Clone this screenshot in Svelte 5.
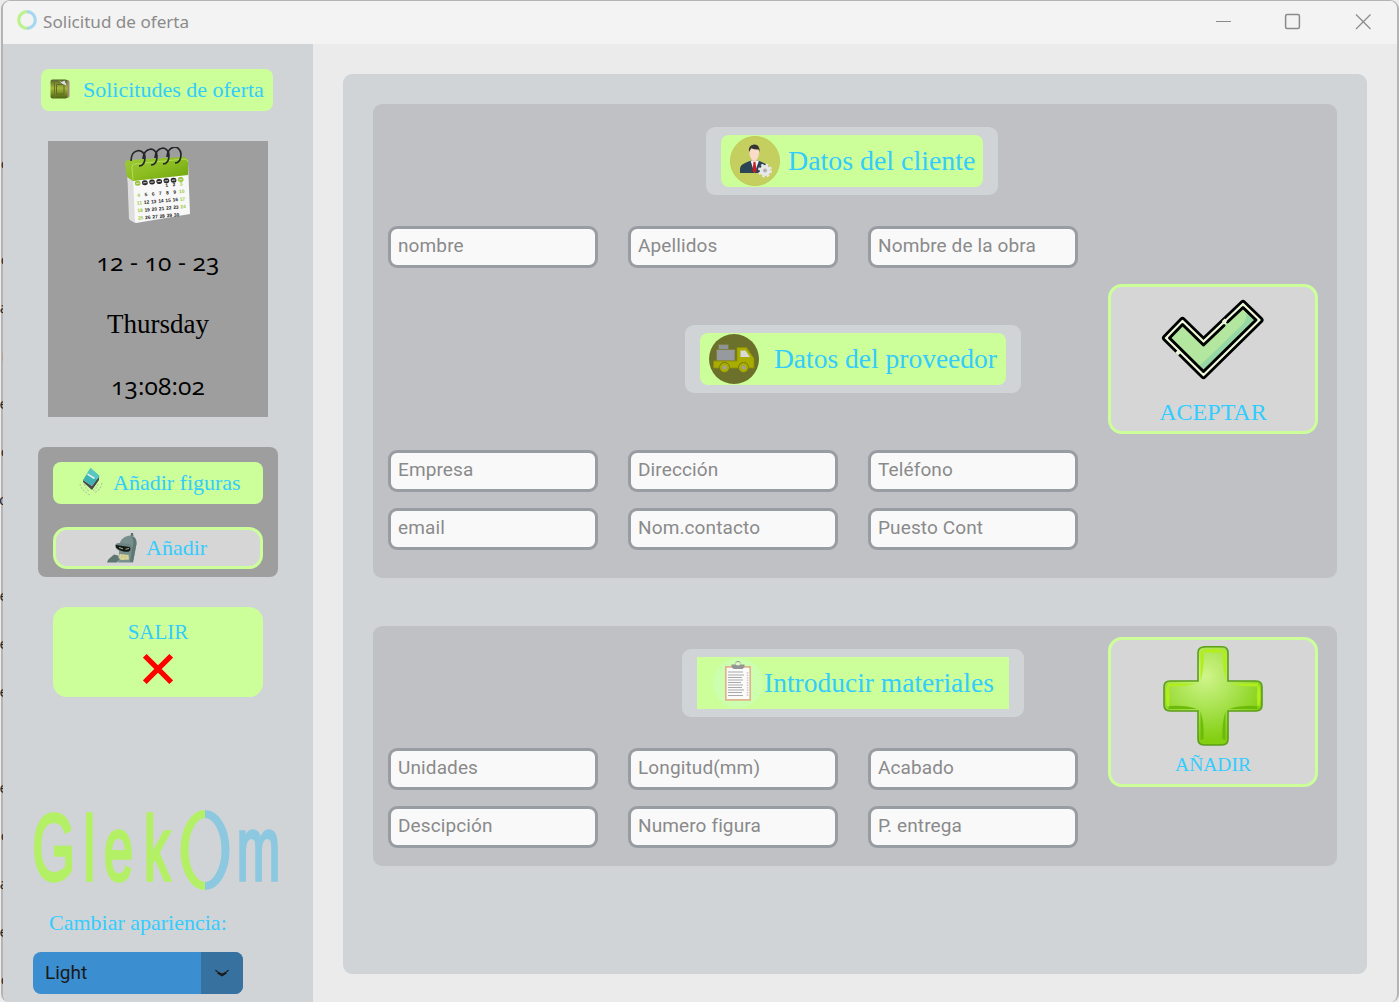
<script>
  let date = $state('12 - 10 - 23');
  let day = $state('Thursday');
  let time = $state('13:08:02');

  const customer = ['nombre', 'Apellidos', 'Nombre de la obra'];
  const company = ['Empresa', 'Dirección', 'Teléfono'];
  const contact = ['email', 'Nom.contacto', 'Puesto Cont'];
  const materials = ['Unidades', 'Longitud(mm)', 'Acabado', 'Descipción', 'Numero figura', 'P. entrega'];

  // Line endings of the document lying behind the window
  const behind = ['c', '', 'c', 'a', 'r', 'e', 'c', 'o', '', 'e', 'e', 'e', '', 'e', 'c', 'a', 'e', 'c'];
  const weeks = [
    ['', '', '', '', '1', '2', '3'],
    ['4', '5', '6', '7', '8', '9', '10'],
    ['11', '12', '13', '14', '15', '16', '17'],
    ['18', '19', '20', '21', '22', '23', '24'],
    ['25', '26', '27', '28', '29', '30', '']
  ];
</script>

<div class="desktop">
  <div class="behind">
    {#each behind as letter}<span>{letter}</span>{/each}
  </div>
  <div class="window">
    <header class="titlebar">
      <svg class="app-icon" width="20" height="20" viewBox="0 0 20 20" fill="none" stroke-width="3.200">
        <path d="M10 1.700a8.300 8.300 0 0 0 0 16.600" stroke="#bdf28a" />
        <path d="M10 1.700a8.300 8.300 0 0 1 0 16.600" stroke="#a5d8ee" />
      </svg>
      <span class="title">Solicitud de oferta</span>
      <svg class="controls" width="160" height="20" viewBox="0 0 160 20" fill="none" stroke="#8a8a8a" stroke-width="1.200">
        <path d="M1 10.500h15" />
        <rect x="70.600" y="3.600" width="13.800" height="13.800" rx="1.500" stroke-width="1.500" />
        <path d="M141 3.500l14.500 14.500M155.500 3.500l-14.500 14.500" />
      </svg>
    </header>

    <div class="body">
      <aside>
        <div class="tag requests">
          <svg width="20" height="20" viewBox="0 0 20 20">
            <defs>
              <linearGradient id="book" x1="0" y1="0" x2="0" y2="1">
                <stop offset="0" stop-color="#53602a" /><stop offset=".45" stop-color="#a7b83c" /><stop offset="1" stop-color="#4a6310" />
              </linearGradient>
            </defs>
            <rect x="2" y="1" width="17.500" height="18" rx="2" fill="#a68a80" />
            <rect x=".5" y=".5" width="17" height="19" rx="2" fill="url(#book)" />
            <path d="M4.500 1v18" stroke="#65752a" />
            <path d="M6.500 5.500h7.500v9.500h-7.500z" fill="none" stroke="#5d6d22" />
            <path d="M8.500 1l3 2 3-1.500 2 5-4-1.500z" fill="#d9dde5" />
          </svg>
          <span>Solicitudes de oferta</span>
        </div>

        <section class="clock">
          <svg width="68" height="78" viewBox="0 0 68 78">
            <defs>
              <linearGradient id="cal" x1="0" y1="0" x2="1" y2="1">
                <stop offset="0" stop-color="#9fca3c" /><stop offset=".5" stop-color="#8cbd20" /><stop offset="1" stop-color="#6ba30c" />
              </linearGradient>
            </defs>
            <path d="M3 18l3 55 6 3 54-9-2-51z" fill="#f8f8f8" />
            <path d="M3 18l2 54 6 4-2-48z" fill="#dedede" />
            <path d="M1 17q0-4 4-4l54-3q5 0 5 5v13L9 34 3 30z" fill="url(#cal)" />
            <path d="M9 33l-1-13q0-3 3-3l49-5q4 0 4 3" fill="none" stroke="#b2db59" stroke-width="1" />
            <g fill="none" stroke="#242629" stroke-width="1.700">
              <path d="M7 14c0-13 13-13 14-4 0 6-2 9-6 9" />
              <path d="M19 12c1-12 13-13 14-3 0 6-2 9-6 9" />
              <path d="M31 11c1-12 13-13 14-3 0 6-2 9-6 9" />
              <path d="M43 10c1-12 13-13 14-3 0 6-2 9-6 9" />
            </g>
            <g transform="rotate(-5 12 40)">
              {#each [0, 1, 2, 3, 4, 5, 6] as i}
                <ellipse cx={14 + i * 7.2} cy="36.500" rx="2.900" ry="2.500" class:weekend={i === 0 || i === 6} class="dow" />
                <path d="M{12.3 + i * 7.2} 36.500h3.400" stroke="#d8d8d8" stroke-width=".9" />
              {/each}
              {#each weeks as week, r}
                {#each week as n, c}
                  <text x={14 + c * 7.2} y={42.5 + r * 7.6} class="num" class:weekend={c === 0 || c === 6}>{n}</text>
                {/each}
              {/each}
            </g>
          </svg>
          <p class="digits">{date}</p>
          <p class="day">{day}</p>
          <p class="digits time">{time}</p>
        </section>

        <section class="figures">
          <div class="tag add-figures">
            <svg width="26" height="30" viewBox="0 0 26 30">
              <g fill="none" stroke="#b3d39a" stroke-width="1.300" stroke-dasharray="2 1.300">
                <path d="M2 17c1 4 4 8 10 11M6 17c1 3 2 5 5 7M24 16c-1 5-4 8-8 10M20 17c-1 3-2 5-5 7" />
              </g>
              <path d="M5 13l9 6 7-10v4l-7 10-9-8z" fill="#4c4650" />
              <path d="M12.500 1l9 8-7.500 10-9-6z" fill="#3fb3b4" />
              <path d="M12.500 1l9 8-2.500 3.500-9-7z" fill="#59c6c2" />
              <path d="M9.500 7l7 4.500" stroke="#d8f3ed" stroke-width="1.800" />
            </svg>
            <span>Añadir figuras</span>
          </div>
          <button class="outlined add-small">
            <svg width="30" height="30" viewBox="0 0 30 30">
              <path d="M24 0h2l.5 3.500h-3z" fill="#59706f" />
              <path d="M12 13c1-7 6-10.500 12-10.500 4 .5 6 4 5.500 8L26 29.500H11l1-9z" fill="#77908e" />
              <path d="M24 4c3 2 3 7 1 12l-2 13h3l3.500-18c0-4-1-7-5.500-7z" fill="#5e7876" />
              <path d="M8 12q1-2 4-2l10 1q3 1 3 4 0 4-4 4l-8-1q-5-2-5-6z" fill="#6c8583" />
              <path d="M9 12l13.500 2q2 2-.5 4.500-8 1-13-4z" fill="#111817" />
              <path d="M12 14.500l4 1.300M18.500 16.300l3.500-.8" stroke="#c9c585" stroke-width=".9" />
              <path d="M12.500 21l9 1 .5 4.500-8 .5-2-2z" fill="#ded99c" />
              <path d="M13 24h9M15 21.500v5M18 22v5" stroke="#b0b080" stroke-width=".4" />
              <path d="M0 29.500c1-4 4-5 7-8l4 1 1 4-2 3z" fill="#5d7573" />
            </svg>
            <span>Añadir</span>
          </button>
        </section>

        <button class="exit">
          <span>SALIR</span>
          <svg width="30" height="30" viewBox="0 0 30 30" stroke="#f00" stroke-width="5.200"><path d="M1.800 1.800l26.400 26.400M28.200 1.800L1.800 28.200" /></svg>
        </button>

        <svg class="logo" width="250" height="84" viewBox="0 0 250 84">
          <g transform="scale(.58 1)" font-size="90" fill="#b4f065" stroke="#b4f065">
            <text y="71" x=".5" font-size="95">G</text>
            <text y="71" x="89">l</text>
            <text y="71" x="124">e</text>
            <text y="71" x="193">k</text>
            <text y="71" x="353" fill="#8cc8e0" stroke="#8cc8e0">m</text>
          </g>
          <path d="M173 5a20.500 36 0 0 0 0 72" fill="none" stroke="#b4f065" />
          <path d="M173 5a20.500 36 0 0 1 0 72" fill="none" stroke="#8cc8e0" />
        </svg>

        <label class="appearance" for="mode">Cambiar apariencia:</label>
        <div class="select" id="mode" role="combobox" tabindex="0" aria-expanded="false" aria-controls="mode">
          <span>Light</span>
          <div class="arrow">
            <svg width="14" height="8" viewBox="0 0 14 8" fill="none" stroke="#1c1c1c" stroke-linecap="round">
              <path d="M.8 1.500l1.500 1M13.200 1.500l-1.500 1" stroke-width="1.300" /><path d="M3.500 4l3.500 2L10.500 4" stroke-width="2.500" />
            </svg>
          </div>
        </div>
      </aside>

      <main>
        <div class="panel">
          <section class="card people">
            <div class="badge client">
              <div class="inner">
                <svg width="50" height="50" viewBox="0 0 50 50">
                  <circle cx="25" cy="25" r="24.500" fill="#c5cf60" stroke="#bfca58" />
                  <path d="M10 37v-4q0-4 5-6l7-3h5l7 3q5 2 5 6v4z" fill="#2b4554" />
                  <path d="M20.500 24.500L24.500 37l4.500-12.500z" fill="#f5f5f5" />
                  <path d="M21.500 19h5.500v5l-2.700 3-2.800-3z" fill="#f0cfba" />
                  <path d="M23.500 26h2l1 9-2 2-2-2z" fill="#c91d27" />
                  <path d="M19.500 13h9.500v5q-1 6-4.700 6t-4.800-6z" fill="#fbdcca" />
                  <path d="M19 16q-1-7 5-7.500 6-.5 5.500 7.500l-1-2.500q-5 0-7-1.500z" fill="#373435" />
                  <circle cx="35" cy="34.500" r="5.400" fill="#e8e8e8" />
                  <circle cx="35" cy="34.500" r="5.500" fill="none" stroke="#e8e8e8" stroke-width="3" stroke-dasharray="2.300 2.020" />
                  <circle cx="35" cy="34.500" r="2" fill="#b0b0b0" />
                </svg>
                <span>Datos del cliente</span>
              </div>
            </div>
            {#each customer as label}<input placeholder={label} aria-label={label} />{/each}

            <button class="outlined action accept">
              <svg width="102" height="80" viewBox="0 0 102 80" stroke-linejoin="round" stroke-linecap="round" fill="none">
                <path d="M20.500 20.500L41.500 41 81 3.500 98 20 41.500 75.500 3.500 38z" stroke="#000" stroke-width="7" />
                <path d="M20.500 20.500L41.500 41 81 3.500 98 20 41.500 75.500 3.500 38z" fill="#eefbdc" stroke="#eefbdc" stroke-width="1.500" />
                <path d="M20.500 24.500L41.500 45 81 7.500 94 20 41.500 71.500 7.500 38z" fill="#b3e69e" />
                <path d="M84 10.500L94 20 41.500 71.500 37 66.500 80 25q6-6 4-14.500z" fill="#96d7a5" />
                <path d="M62 25.500L41.500 45 20.500 24.500 7.500 38 41.500 71.500 94 20 81 7.500 65.500 22" stroke="#000" stroke-width="3" />
                <path d="M61 22.500l3-2.800M14.500 51.500l2.800 2.800" stroke="#e8f6d8" stroke-width="3.500" stroke-linecap="butt" />
              </svg>
              <span>ACEPTAR</span>
            </button>

            <div class="badge provider">
              <div class="inner">
                <svg width="50" height="50" viewBox="0 0 50 50">
                  <circle cx="25" cy="25" r="25" fill="#6b702b" />
                  <g stroke="#7f7e3d" stroke-width=".9">
                    <path d="M9.500 10.500h10v5h-10z" fill="#8f9396" />
                    <path d="M7.500 15.500h18.500V27H7.500z" fill="#96999d" />
                    <path d="M4.500 27H28V13.500h9.500l7.500 11V34h-40.500z" fill="#a9ad00" stroke="#8b8f05" />
                    <path d="M31.500 16.500h5l4.500 6.500h-9.500z" fill="#d8dad9" stroke="none" />
                    <circle cx="15.500" cy="33.500" r="5" fill="#a9ad00" stroke="#70751b" />
                    <circle cx="34.500" cy="33.500" r="5" fill="#a9ad00" stroke="#70751b" />
                    <circle cx="15.500" cy="33.500" r="2.300" fill="#a3a18c" stroke="none" />
                    <circle cx="34.500" cy="33.500" r="2.300" fill="#a3a18c" stroke="none" />
                  </g>
                </svg>
                <span>Datos del proveedor</span>
              </div>
            </div>
            {#each company as label}<input class="company" placeholder={label} aria-label={label} />{/each}
            {#each contact as label}<input class="contact" placeholder={label} aria-label={label} />{/each}
          </section>

          <section class="card materials">
            <div class="badge stock">
              <div class="inner">
                <svg width="50" height="50" viewBox="0 0 50 50">
                  <circle cx="25" cy="25" r="25" fill="#ccffae" />
                  <path d="M12.800 8.800h24.400v33H12.800z" fill="#fafafa" stroke="#e2b48d" stroke-width="1.700" />
                  <path d="M18.500 6.500h3.500q0-3.500 3-3.500t3 3.500h3.500v2.500l-2 2h-9l-2-2z" fill="#949494" />
                  <ellipse cx="25" cy="5.700" rx="2.800" ry="1.700" fill="#dff5cc" />
                  <path d="M15 14h15M15 17h16M15 19.500h14M15 22h15M15 24.500h13M15 27h15M15 29.500h14M15 32h16M15 34.500h14M15 37.500h15" stroke="#a9a9a9" stroke-width="1" />
                  <path d="M34.500 14v24" stroke="#ccc" stroke-width="1.500" stroke-dasharray="1.500 1" />
                </svg>
                <span>Introducir materiales</span>
              </div>
            </div>
            <button class="outlined action add">
              <svg width="102" height="102" viewBox="0 0 102 102">
                <defs>
                  <radialGradient id="plus" cx=".42" cy=".3" r=".65">
                    <stop offset="0" stop-color="#d0f58c" /><stop offset=".5" stop-color="#a9e351" /><stop offset="1" stop-color="#83cf12" />
                  </radialGradient>
                </defs>
                <path d="M42 1.800h18q6 0 6 6V36h28q6 0 6 6v18q0 6-6 6H66v28q0 6-6 6H42q-6 0-6-6V66H8q-6 0-6-6V42q0-6 6-6h28V8q0-6 6-6z" fill="url(#plus)" stroke="#5b9f18" stroke-width="1.600" />
                <g fill="#b2ee1e">
                  <path d="M38.500 36V7q3-3 3.500 2 0 15-3.500 27zM40 5q11-2 22 0v2q-11 1.500-22 0zM64 35V7q-3-3-3.500 2 0 15 3.500 26z" />
                  <path d="M67 38.500h29v2.500q-16 1-29-2.500zM35 38.500H6v2.500q16 1 29-2.500zM97.500 41q2 10 0 20h-2q-1.500-10 0-20zM5 41q-2 10 0 20h2q1.500-10 0-20z" />
                </g>
                <g fill="#6cbb0a">
                  <path d="M35 64H6l1.500-3Q23 60 35 64zM67 64h29l-1.500-3Q79 60 67 64zM38.500 66v29l3-1q1-14-3-28zM63.500 66v29l-3-1q-1-14 3-28z" />
                </g>
              </svg>
              <span>AÑADIR</span>
            </button>
            {#each materials as label}<input placeholder={label} aria-label={label} />{/each}
          </section>
        </div>
      </main>
    </div>
  </div>
</div>

<style>
  :global(body) { background: #ececec; overflow: hidden; }
  * { box-sizing: border-box; }
  .desktop {
    position: relative; display: flex; width: 1399px; height: 1002px; padding-left: 1px;
    background: #ececec; font-family: "Liberation Serif", serif; color: #33ccff; overflow: hidden;
  }
  .behind {
    position: absolute; left: 0; top: 139px; width: 3px; z-index: 1; overflow: hidden;
    display: flex; flex-direction: column; align-items: flex-end;
    font: 15px/48px "Open Sans", sans-serif; color: #222;
  }
  .behind span { height: 48px; flex: none; margin-right: -5px; }
  .window {
    flex: 1; display: flex; flex-direction: column; background: #ebebeb;
    border: 2px solid #b4b4b4; border-top-width: 1px; border-bottom: 0; border-radius: 9px 9px 8px 8px; overflow: hidden;
  }
  .titlebar { height: 43px; flex: none; display: flex; align-items: center; padding: 0 22px 2px 14px; background: #f3f3f3; }
  .app-icon { margin-top: -3px; }
  .title { margin-left: 6px; font: 17.100px "Noto Sans", sans-serif; color: #8b8b8b; }
  .controls { margin: -2px 0 0 auto; }
  .body { flex: 1; display: flex; min-height: 0; }
  button { font: inherit; color: inherit; cursor: pointer; }
  svg { flex: none; display: block; }
  span, p, label { white-space: nowrap; }

  aside { width: 310px; flex: none; background: #d0d4d7; display: flex; flex-direction: column; align-items: flex-start; padding-top: 25px; }
  .tag { height: 42px; flex: none; display: flex; align-items: center; background: #ccff99; border-radius: 8px; font-size: 22px; }
  .requests { width: 232px; margin-left: 38px; padding-left: 9px; gap: 13px; }
  .requests svg { margin-top: -2px; }
  .clock {
    width: 220px; height: 276px; margin: 30px 0 0 45px; padding-top: 6px;
    background: #9e9e9e; color: #000; display: flex; flex-direction: column; align-items: center;
  }
  .clock p { margin: 0; height: 60px; line-height: 60px; }
  .clock .digits { font-family: "Open Sans", "Noto Sans", sans-serif; font-size: 24.500px; letter-spacing: .15px; font-variant-numeric: oldstyle-nums; margin-top: 7px; }
  .clock .day { font-size: 27px; margin-top: 2px; }
  .clock .time { margin-top: 2px; }
  .dow { fill: #292929; }
  .num { font: bold 4.800px "Liberation Sans", sans-serif; text-anchor: middle; fill: #222; }
  .weekend { fill: #9ac73a; }
  .figures { width: 240px; height: 130px; margin: 30px 0 0 35px; padding: 15px 15px 0; background: #9e9e9e; border-radius: 8px; display: flex; flex-direction: column; gap: 23px; }
  .add-figures { padding-left: 25px; gap: 9px; }
  .add-figures svg { margin-top: -3px; }
  .outlined { border: 3px solid #ccff99; border-radius: 14px; background: #d6d6d6; }
  .add-small { height: 42px; flex: none; width: 210px; padding: 0 0 0 51px; display: flex; align-items: center; gap: 9px; font-size: 22px; }
  .exit {
    width: 210px; height: 90px; margin: 30px 0 0 50px; padding: 13px 0 0; border: 0; border-radius: 14px; background: #ccff99;
    display: flex; flex-direction: column; align-items: center; font-size: 21px; line-height: 25px; gap: 9px;
  }
  .logo { margin: 112px 0 0 29px; stroke-width: 8; }
  .logo text { font-family: "Liberation Sans", Arial, sans-serif; }
  .logo g { stroke-width: 3.500; }
  .appearance { margin: 17px 0 0 46px; font-size: 22px; line-height: 26px; }
  .select { width: 210px; height: 42px; margin: 16px 0 0 30px; display: flex; align-items: center; background: #3b8ed0; border-radius: 8px; overflow: hidden; color: #1a1a1a; font: 19px Roboto, sans-serif; }
  .select span { flex: 1; padding: 0 0 1px 12px; }
  .arrow { width: 42px; height: 42px; background: #36719f; display: flex; align-items: center; justify-content: center; }

  main { flex: 1; padding: 30px; }
  .panel { height: 900px; padding: 30px; background: #d0d4d7; border-radius: 9px; display: flex; flex-direction: column; gap: 48px; }
  .card { display: grid; grid-template-columns: repeat(4, 210px); column-gap: 30px; align-items: start; padding: 23px 19px 0 15px; background: #c0c1c5; border-radius: 9px; }
  .people { grid-template-rows: 99px 99px 125px 58px 42px; height: 474px; }
  .materials { grid-template-rows: 99px 58px 42px; height: 240px; }
  .badge { grid-column: 1 / 5; justify-self: center; height: 68px; padding: 8px 15px; background: #d0d4d7; border-radius: 9px; }
  .inner { height: 52px; display: flex; align-items: center; background: #ccff99; border-radius: 8px; font-size: 27.500px; }
  .client { grid-row: 1; width: 292px; margin-right: 2px; }
  .client .inner { padding-left: 9px; gap: 8px; font-size: 27.900px; }
  .provider { grid-row: 3; width: 336px; }
  .provider .inner { padding-left: 9px; gap: 15px; }
  .stock { grid-row: 1; width: 342px; }
  .stock .inner { padding-left: 16px; gap: 1px; border-radius: 0; }
  input {
    width: 210px; height: 42px; padding: 0 7px 4px; border: 3px solid #979da2; border-radius: 9px; background: #f9f9fa;
    font: 19px Roboto, sans-serif; letter-spacing: .12px; color: #1a1a1a;
  }
  input::placeholder { color: #8a8a8a; opacity: 1; }
  .company { grid-row: 4; }
  .contact { grid-row: 5; }
  .action { width: 210px; height: 150px; padding: 0; grid-column: 4; display: flex; flex-direction: column; align-items: center; }
  .accept { grid-row: 2 / 4; margin-top: 58px; padding-top: 13px; font-size: 24px; line-height: 28px; gap: 18px; }
  .accept svg { overflow: visible; }
  .add { grid-row: 1 / 4; margin-top: -12px; padding-top: 5px; font-size: 19.500px; line-height: 24px; gap: 6px; }
</style>
